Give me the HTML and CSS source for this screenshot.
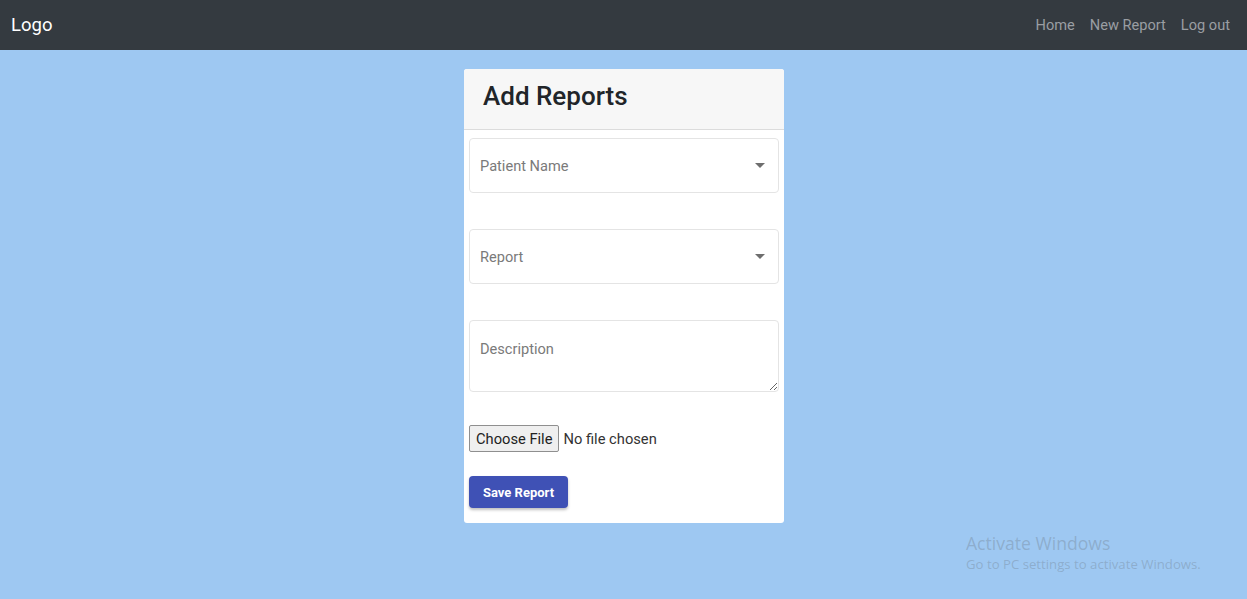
FILE: index.html
```html
<!DOCTYPE html>
<html>
<head>
<meta charset="utf-8">
<link rel="stylesheet" href="styles.css">
</head>
<body>
<nav class="navbar">
  <a class="brand" href="#">Logo</a>
  <div class="links">
    <a href="#">Home</a>
    <a href="#">New Report</a>
    <a href="#">Log out</a>
  </div>
</nav>
<main class="main">
  <div class="card">
    <div class="card-header"><h1>Add Reports</h1></div>
    <form class="card-body">
      <div class="field select">
        <span class="placeholder">Patient Name</span>
        <span class="arrow"></span>
      </div>
      <div class="field select">
        <span class="placeholder">Report</span>
        <span class="arrow"></span>
      </div>
      <textarea class="field area" placeholder="Description"></textarea>
      <input class="file" type="file">
      <button type="button" class="save">Save Report</button>
    </form>
  </div>
</main>
<div class="watermark">
  <div class="wm-title">Activate Windows</div>
  <div class="wm-sub">Go to PC settings to activate Windows.</div>
</div>
</body>
</html>
```

FILE: styles.css
```css
html, body {
  margin: 0;
  padding: 0;
  height: 100%;
}
body {
  background: #9ec8f2;
  font-family: Roboto, "Liberation Sans", sans-serif;
  overflow: hidden;
}
.navbar {
  height: 50px;
  background: #343a40;
  display: flex;
  align-items: center;
  justify-content: space-between;
  padding: 0 17px 0 11px;
}
.brand {
  color: #fff;
  font-size: 18.5px;
  text-decoration: none;
}
.links {
  display: flex;
  gap: 15px;
}
.links a {
  color: #9a9ea3;
  font-size: 14.6px;
  text-decoration: none;
}
.main {
  display: flex;
  justify-content: center;
  padding-top: 19px;
}
.card {
  width: 320px;
  background: #fff;
  border-radius: 3px;
  overflow: hidden;
  margin-left: 1px;
}
.card-header {
  height: 61px;
  background: #f7f7f7;
  border-bottom: 1px solid #dcdcdc;
  display: flex;
  align-items: center;
  padding: 0 0 6px 19px;
  box-sizing: border-box;
}
.card-header h1 {
  margin: 0;
  font-size: 26px;
  font-weight: 500;
  color: #212529;
}
.card-body {
  padding: 8px 5px 15px;
  display: flex;
  flex-direction: column;
  align-items: flex-start;
}
.field {
  width: 310px;
  box-sizing: border-box;
  border: 1px solid #e4e4e4;
  border-radius: 4px;
  background: #fff;
}
.select {
  height: 55px;
  display: flex;
  align-items: center;
  justify-content: space-between;
  padding: 0 13px 0 10px;
  margin-bottom: 36px;
}
.placeholder {
  color: #7a7a7a;
  font-size: 14.6px;
}
.arrow {
  width: 0;
  height: 0;
  border-left: 5px solid transparent;
  border-right: 5px solid transparent;
  border-top: 5px solid #6e6e6e;
}
.area {
  height: 72px;
  padding: 19px 10px;
  font-family: Roboto, "Liberation Sans", sans-serif;
  font-size: 14.6px;
  margin: 0 0 33px;
  outline: none;
}
.area::placeholder {
  color: #7a7a7a;
}
.file {
  font-family: Roboto, "Liberation Sans", sans-serif;
  font-size: 14.7px;
  color: #333;
  margin: 0 0 24px;
}
.file::file-selector-button {
  font-family: Roboto, "Liberation Sans", sans-serif;
  font-size: 14.7px;
  height: 27px;
  padding: 0 6px;
  border: 1px solid #8f8f8f;
  border-radius: 2px;
  background: #efefef;
  color: #222;
  margin-right: 4px;
}
.save {
  width: 99px;
  height: 32px;
  background: #3f51b5;
  color: #fff;
  border: none;
  border-radius: 4px;
  font-family: Roboto, "Liberation Sans", sans-serif;
  font-weight: 700;
  font-size: 13px;
  box-shadow: 0 2px 3px rgba(0,0,0,0.25);
}
.watermark {
  position: absolute;
  left: 966px;
  top: 533px;
  color: rgba(120,140,160,0.45);
  font-family: "Open Sans", "Noto Sans", sans-serif;
}
.wm-title {
  font-size: 17.6px;
  line-height: 20px;
}
.wm-sub {
  font-size: 13.2px;
  line-height: 22px;
}
```
